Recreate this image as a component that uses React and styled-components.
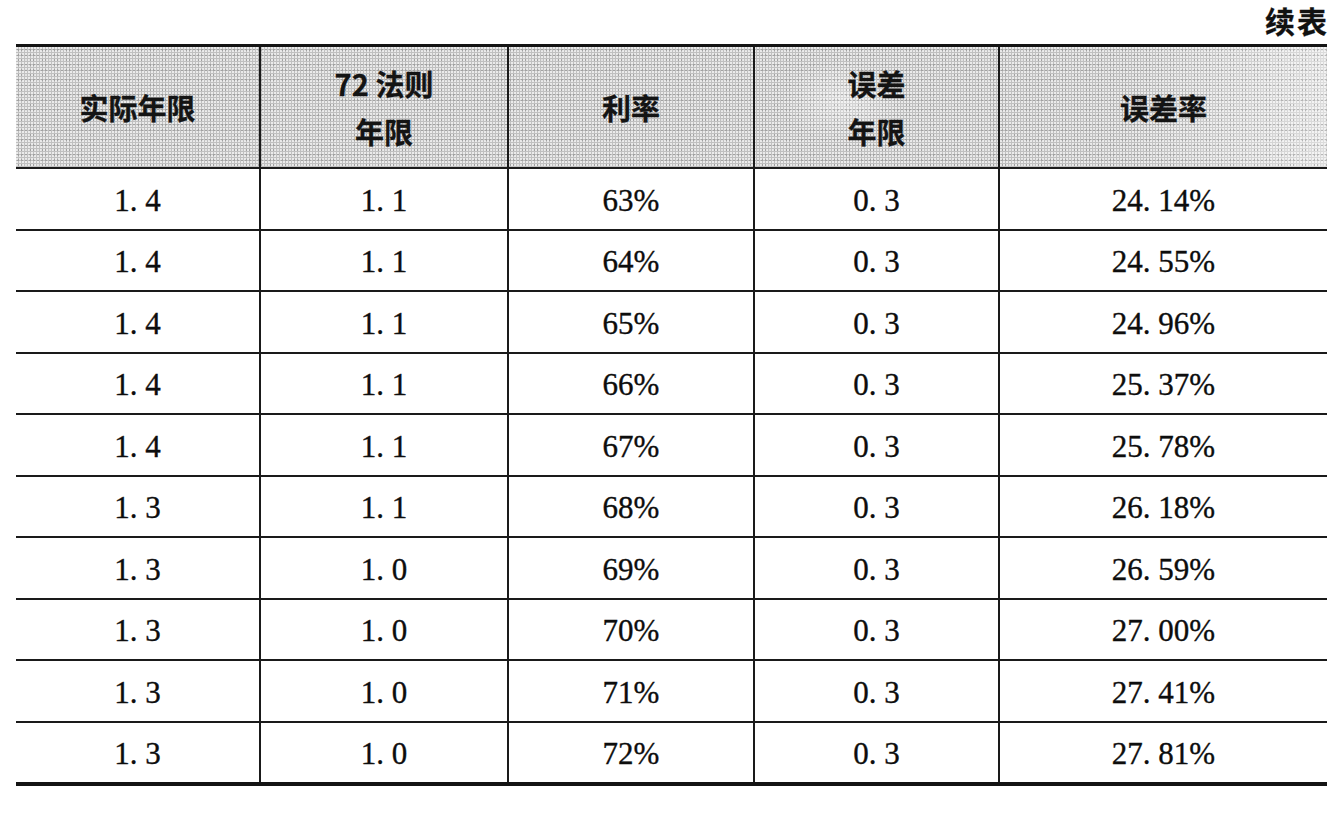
import React from 'react'
import styled, { createGlobalStyle } from 'styled-components';

const GlobalStyle = createGlobalStyle`
	html, body {
		margin: 0;
		padding: 0;
		background: #ffffff;
	}
	body {
		font-family: "Liberation Serif", "Noto Sans CJK SC", serif;
		color: #111111;
	}
`;

const Page = styled.div`
	width: 1338px;
	height: 825px;
	box-sizing: border-box;
	padding: 3px 11px 0 16px;
	display: flex;
	flex-direction: column;
`;

const Caption = styled.div`
	align-self: flex-end;
	height: 41px;
	font-family: "Noto Sans CJK SC", sans-serif;
	font-weight: 700;
	font-size: 30px;
	line-height: 34px;
	letter-spacing: 2px;
	margin-right: -2px;
	color: #111111;
	-webkit-text-stroke: 0.3px #111111;
`;

const Table = styled.div`
	border-top: 3px solid #141414;
	border-bottom: 4px solid #141414;
	display: flex;
	flex-direction: column;
`;

const Row = styled.div`
	display: grid;
	grid-template-columns: 243px 248px 246px 245px 1fr;
	height: ${p => p.$height}px;
	border-bottom: ${p => p.$last ? 0 : 2}px solid #1a1a1a;
	box-sizing: border-box;
	background-color: ${p => p.$head ? '#c0c0c0' : 'transparent'};
	background-image: ${p => p.$head ? `
		radial-gradient(circle at 1px 1px, rgba(255,255,255,0.7) 0.7px, transparent 1.1px),
		radial-gradient(circle at 2px 3px, rgba(30,30,30,0.4) 0.5px, transparent 0.9px),
		radial-gradient(ellipse 60px 40px at 63% 45%, rgba(255,255,255,0.4), transparent),
		linear-gradient(90deg, rgba(255,255,255,0) 0%, rgba(255,255,255,0) 85%, rgba(255,255,255,0.45) 100%)
	` : 'none'};
	background-size: 3px 3px, 4px 5px, 100% 100%, 100% 100%;
`;

const Cell = styled.div`
	display: flex;
	flex-direction: column;
	align-items: center;
	justify-content: center;
	border-left: ${p => p.$first ? 0 : 2}px solid #1a1a1a;
	font-family: "Liberation Serif", "Times New Roman", serif;
	font-size: 31px;
	line-height: 1;
	padding-top: 3px;
	color: #0d0d0d;
	-webkit-text-stroke: 0.35px #0d0d0d;
`;

const HeadCell = styled(Cell)`
	font-family: "Noto Sans CJK SC", sans-serif;
	font-weight: 700;
	font-size: 29px;
	line-height: 48px;
	color: #141414;
	padding-top: 0;
	-webkit-text-stroke: 0.3px #141414;
`;

const headers = [['实际年限'], ['72 法则', '年限'], ['利率'], ['误差', '年限'], ['误差率']];

const rows = [
	['1. 4', '1. 1', '63%', '0. 3', '24. 14%'],
	['1. 4', '1. 1', '64%', '0. 3', '24. 55%'],
	['1. 4', '1. 1', '65%', '0. 3', '24. 96%'],
	['1. 4', '1. 1', '66%', '0. 3', '25. 37%'],
	['1. 4', '1. 1', '67%', '0. 3', '25. 78%'],
	['1. 3', '1. 1', '68%', '0. 3', '26. 18%'],
	['1. 3', '1. 0', '69%', '0. 3', '26. 59%'],
	['1. 3', '1. 0', '70%', '0. 3', '27. 00%'],
	['1. 3', '1. 0', '71%', '0. 3', '27. 41%'],
	['1. 3', '1. 0', '72%', '0. 3', '27. 81%'],
];

export default function App() {
	return (
		<Page>
			<GlobalStyle />
			<Caption>续表</Caption>
			<Table>
				<Row $head $height={122}>
					{headers.map((lines, i) => (
						<HeadCell key={i} $first={i === 0}>
							{lines.map(l => <span key={l}>{l}</span>)}
						</HeadCell>
					))}
				</Row>
				{rows.map((r, ri) => (
					<Row key={ri} $height={ri === rows.length - 1 ? 59.5 : 61.5} $last={ri === rows.length - 1}>
						{r.map((v, ci) => (
							<Cell key={ci} $first={ci === 0}>{v}</Cell>
						))}
					</Row>
				))}
			</Table>
		</Page>
	);
}
